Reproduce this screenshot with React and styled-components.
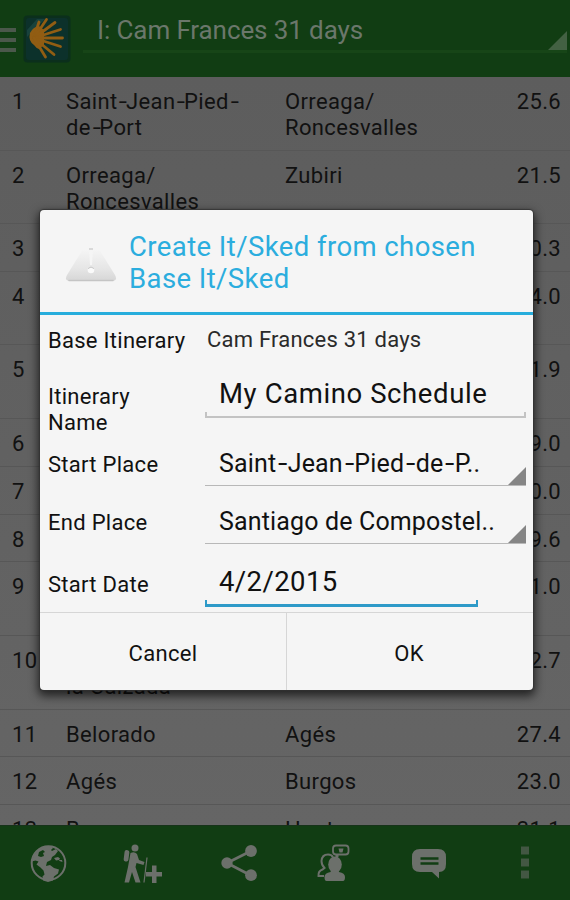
import React, { useState } from "react";
import styled, { createGlobalStyle } from "styled-components";

const GlobalStyle = createGlobalStyle`
  * {
    box-sizing: border-box;
  }

  body {
    margin: 0;
    background-color: #626262;
    font-family: Roboto, "Noto Sans", sans-serif;
  }
`;

const Screen = styled.div`
  position: relative;
  display: flex;
  flex-direction: column;
  width: 570px;
  height: 900px;
  overflow: hidden;
  background-color: #626262;
  color: #111;
`;

const TopBar = styled.header`
  display: flex;
  flex: 0 0 77px;
  align-items: flex-start;
  background-color: #113d13;
`;

const MenuLines = styled.div`
  display: flex;
  flex-direction: column;
  gap: 6px;
  width: 16px;
  margin-right: 7px;
  padding-top: 28px;
`;

const MenuLine = styled.span`
  height: 4px;
  background-color: #4b584b;
`;

const LogoIcon = styled.svg`
  display: block;
  width: 48px;
  height: 48px;
  margin-top: 15px;
`;

const TitleSpinner = styled.div`
  display: flex;
  align-items: flex-end;
  justify-content: space-between;
  flex: 1;
  height: 53px;
  margin: 0 3px 0 12px;
  padding-left: 14px;
  border-bottom: 3px solid #174517;
`;

const Title = styled.h1`
  margin: 0 0 4px;
  color: #6b776b;
  font-size: 26px;
  font-weight: 400;
  line-height: 32px;
  letter-spacing: -0.1px;
`;

const Corner = styled.span`
  flex: none;
  width: ${(props) => props.$size || 18}px;
  height: ${(props) => props.$size || 18}px;
  background-color: ${(props) => props.$color || "#858585"};
  clip-path: polygon(100% 0, 100% 100%, 0 100%);
`;

const StageList = styled.main`
  flex: 1;
  overflow: hidden;
  background: linear-gradient(#5d5d5d, #656565);
`;

const StageRow = styled.div`
  display: grid;
  grid-template-columns: 54px 219px 1fr auto;
  height: ${(props) => props.$height}px;
  padding: 12px 9px 0 12px;
  border-bottom: 1px solid #575757;
  font-size: 22px;
  line-height: 26px;
  letter-spacing: 0.35px;
  white-space: pre-line;
`;

const Dash = styled.span`
  display: inline-block;
  width: ${(props) => props.$width}em;
  text-indent: 0.06em;
  transform: scaleX(1.35);
  transform-origin: left;
`;

const BottomBar = styled.footer`
  display: flex;
  flex: 0 0 75px;
  align-items: center;
  justify-content: space-between;
  padding: 0 18px 0 21px;
  border-top: 1px solid #17331a;
  background-color: #113d13;
  color: #6c706b;
`;

const ActionIcon = styled.svg`
  display: block;
  width: 54px;
  height: 54px;
`;

const Overlay = styled.div`
  position: absolute;
  inset: 0;
  display: flex;
  align-items: center;
  padding-left: 40px;
`;

const Dialog = styled.section`
  width: 493px;
  height: 480px;
  border-radius: 4px;
  overflow: hidden;
  background-color: #f5f5f5;
  box-shadow: 0 0 1px 1px rgba(50, 50, 50, 0.8), 0 4px 10px 2px rgba(0, 0, 0, 0.65);
`;

const DialogHeader = styled.div`
  display: flex;
  align-items: center;
  height: 105px;
  padding-left: 24px;
  border-bottom: 3px solid #27addc;
`;

const WarningIcon = styled.svg`
  display: block;
  width: 54px;
  height: 48px;
  margin-right: 11px;
`;

const DialogTitle = styled.h2`
  margin: 4px 0 0;
  color: #2badde;
  font-size: 27.5px;
  font-weight: 400;
  line-height: 32.5px;
  letter-spacing: 0.42px;
  white-space: pre-line;
`;

const Form = styled.div`
  height: 298px;
  border-bottom: 1px solid #d6d6d6;
`;

const FormRow = styled.div`
  display: grid;
  grid-template-columns: 157px 321px;
  height: ${(props) => props.$height}px;
  padding-left: 8px;
`;

const Label = styled.label`
  padding-top: ${(props) => props.$top}px;
  font-size: 22px;
  line-height: 26px;
  letter-spacing: 0.28px;
  white-space: pre-line;
`;

const BaseValue = styled.span`
  padding: 12px 0 0 2px;
  color: #2a2a2a;
  font-size: 22px;
  line-height: 26px;
  letter-spacing: 0.22px;
`;

const InputFrame = styled.div`
  position: relative;
  width: ${(props) => props.$width}px;
  height: ${(props) => props.$height}px;
  border-bottom: ${(props) => (props.$focused ? 3 : 2)}px solid
    ${(props) => (props.$focused ? "#2e9ac8" : "#c3c3c3")};

  &::after {
    content: "";
    position: absolute;
    right: 0;
    bottom: 0;
    left: 0;
    height: 4px;
    border: solid ${(props) => (props.$focused ? "#2e9ac8" : "#c3c3c3")};
    border-width: 0 2px;
  }
`;

const Input = styled.input`
  width: 100%;
  height: 100%;
  padding: ${(props) => props.$top}px 0 0 14px;
  border: none;
  outline: none;
  background: transparent;
  color: #111;
  font-family: inherit;
  font-size: 27.5px;
  letter-spacing: ${(props) => props.$spacing}px;
`;

const Spinner = styled.div`
  display: flex;
  align-items: flex-end;
  justify-content: space-between;
  height: ${(props) => props.$height}px;
  padding-left: 14px;
  border-bottom: 1px solid #b8b8b8;
`;

const SpinnerText = styled.span`
  margin-bottom: 5px;
  font-size: 25px;
  line-height: 32px;
  letter-spacing: 0.15px;
  white-space: nowrap;
`;

const DialogActions = styled.div`
  display: grid;
  grid-template-columns: 247px 1fr;
  height: 77px;
`;

const DialogButton = styled.button`
  padding: 4px ${(props) => (props.$divided ? 0 : 2)}px 0 0;
  border: 0 solid #d6d6d6;
  border-right-width: ${(props) => (props.$divided ? 1 : 0)}px;
  background: transparent;
  color: #111;
  font-family: inherit;
  font-size: 22px;
  letter-spacing: 0.3px;
  cursor: pointer;
`;

const stages = [
  { id: 1, from: "Saint-Jean-Pied-\nde-Port", to: "Orreaga/\nRoncesvalles", km: "25.6", height: 74 },
  { id: 2, from: "Orreaga/\nRoncesvalles", to: "Zubiri", km: "21.5", height: 73 },
  { id: 3, from: "Zubiri", to: "Pamplona", km: "20.3", height: 48 },
  { id: 4, from: "Pamplona", to: "Puente la\nReina", km: "24.0", height: 73 },
  { id: 5, from: "Puente la\nReina", to: "Estella", km: "21.9", height: 74 },
  { id: 6, from: "Estella", to: "Torres del Río", km: "29.0", height: 48 },
  { id: 7, from: "Torres del Río", to: "Logroño", km: "20.0", height: 48 },
  { id: 8, from: "Logroño", to: "Nájera", km: "29.6", height: 47 },
  { id: 9, from: "Nájera", to: "Santo Domingo de\nla Calzada", km: "21.0", height: 74 },
  { id: 10, from: "Santo Domingo de\nla Calzada", to: "Belorado", km: "22.7", height: 74 },
  { id: 11, from: "Belorado", to: "Agés", km: "27.4", height: 47 },
  { id: 12, from: "Agés", to: "Burgos", km: "23.0", height: 48 },
  { id: 13, from: "Burgos", to: "Hontanas", km: "31.1", height: 48 },
];

// tip of each ray of the shell, clockwise from the top
const rays = [
  [16, 7],
  [23.5, 4.500],
  [32, 7.500],
  [37.500, 14.500],
  [39.500, 23],
  [37.500, 31.500],
  [31, 39.500],
  [22.500, 42],
];

// Hyphens are drawn wider than the font has them
const withDashes = (text, width) =>
  text.split(/(-)/).map((part, i) =>
    part === "-" ? (
      <Dash key={i} $width={width}>
        -
      </Dash>
    ) : (
      part
    )
  );

const ShellLogo = () => (
  <LogoIcon viewBox="0 0 48 48">
    <rect x="0.5" y="0.5" width="47" height="47" rx="4" fill="#0b2f1c" />
    <rect x="3" y="3" width="42" height="42" rx="3" fill="#0c312b" />
    <path d="M4 15 14 4h8L4 22z" fill="#23504b" opacity="0.55" />
    <path d="M7 18q3-6 9-7l5 4v15l-5 4q-3-1-5-4-6-4-4-12z" fill="#915d13" />
    <g stroke="#915d13" strokeWidth="2.800" strokeLinecap="round">
      {rays.map(([x, y]) => (
        <line key={`${x}-${y}`} x1="11" y1="23" x2={x} y2={y} />
      ))}
    </g>
  </LogoIcon>
);

const GlobeIcon = () => (
  <ActionIcon viewBox="0 0 54 54" fill="currentColor">
    <circle cx="27.5" cy="27" r="16.8" fill="none" stroke="currentColor" strokeWidth="2" />
    <path d="M13 19 18 13l6-2.500 6-.5 2 2-2 2 1 1 4-2 2 2-3 4-3 2-1 3-4 2-1 4 4-1 4 3 5 1.500-1 4-4 3-1 4-5 1.500-5-1.500-.5-4 2-2-1-4-3-3-4-3 2-3-3-1-4 1z" />
    <path d="M33 22l4-1 2 1.500-1 1.500-3 .5zm5 2 3 0 .5 2-3-1z" />
    <path d="M18 16l4-2 2 2-2 1 1 3-3 1-3-1z" fill="#113d13" />
  </ActionIcon>
);

const HikerIcon = () => (
  <ActionIcon viewBox="0 0 54 54" fill="currentColor">
    <circle cx="19" cy="12" r="3.5" />
    <rect x="8.2" y="14" width="4.8" height="11.5" rx="2" transform="rotate(7 10 19)" />
    <path d="M14.500 17q4-2 6.500 1l2 6 5.500 2-1 3-7-2-1 4 5 15.500h-5L16 36l-3 10.500H8.500L12 31z" />
    <path d="M31 21.500l-3 25" stroke="currentColor" strokeWidth="1.2" />
    <path d="M36 29.500h4.500V36H46v4.500h-5.500V47H36v-6.500h-6V36h6z" />
  </ActionIcon>
);

const ShareIcon = () => (
  <ActionIcon viewBox="0 0 54 54" fill="currentColor">
    <path d="M39 15 15 27l24 12.500" fill="none" stroke="currentColor" strokeWidth="2.800" />
    <circle cx="15" cy="27" r="5.700" />
    <circle cx="39" cy="15" r="5.900" />
    <circle cx="39" cy="39.200" r="5.900" />
  </ActionIcon>
);

const PeopleIcon = () => (
  <ActionIcon viewBox="0 0 54 54" fill="currentColor">
    <path
      d="M17 40h-5.500q-.5-5 4-6.500l2-1.500q-3-3-3-7 .5-6.500 6.500-6.500 4 0 5 3"
      fill="none"
      stroke="currentColor"
      strokeWidth="2"
    />
    <ellipse cx="28" cy="28.500" rx="6.800" ry="8" />
    <path d="M24.500 33h7l.5 3q6 1 6 5 0 4-2 4H19.500q-2 0-2-4 0-4 6-5z" />
    <rect x="26" y="9.500" width="15.500" height="9" rx="3" fill="none" stroke="currentColor" strokeWidth="1.800" />
    <path d="M28.500 18l3 0 0 3-3 3z" />
    <path d="M31.500 12.500h5l-1 4h-3z" />
  </ActionIcon>
);

const CommentIcon = () => (
  <ActionIcon viewBox="0 0 54 54" fill="currentColor">
    <path d="M17 13h18q8 0 8 8v7q0 8-7 8v6.500L29 36H17q-8 0-8-8v-7q0-8 8-8z" />
    <path d="M17.500 22.500h18M17.500 27.500h18" stroke="#113d13" strokeWidth="2.500" />
  </ActionIcon>
);

const MoreIcon = () => (
  <ActionIcon viewBox="0 0 54 54" fill="#435743">
    <rect x="23" y="10.500" width="8" height="8" />
    <rect x="23" y="22.500" width="8" height="8" />
    <rect x="23" y="34.500" width="8" height="8" />
  </ActionIcon>
);

const App = () => {
  const [name, setName] = useState("My Camino Schedule");
  const [date, setDate] = useState("4/2/2015");

  return (
    <Screen>
      <GlobalStyle />
      <TopBar>
        <MenuLines>
          <MenuLine />
          <MenuLine />
          <MenuLine />
        </MenuLines>
        <ShellLogo />
        <TitleSpinner>
          <Title>I: Cam Frances 31 days</Title>
          <Corner $size={19} $color="#436143" />
        </TitleSpinner>
      </TopBar>

      <StageList>
        {stages.map((stage) => (
          <StageRow key={stage.id} $height={stage.height}>
            <span>{stage.id}</span>
            <span>{withDashes(stage.from, 0.39)}</span>
            <span>{stage.to}</span>
            <span>{stage.km}</span>
          </StageRow>
        ))}
      </StageList>

      <BottomBar>
        <GlobeIcon />
        <HikerIcon />
        <ShareIcon />
        <PeopleIcon />
        <CommentIcon />
        <MoreIcon />
      </BottomBar>

      {/* Create schedule dialog */}
      <Overlay>
        <Dialog>
          <DialogHeader>
            <WarningIcon viewBox="0 0 54 48">
              <defs>
                <linearGradient id="warning" x1="0" y1="0" x2="0" y2="1">
                  <stop offset="0.25" stopColor="#f5f5f5" />
                  <stop offset="0.7" stopColor="#e6e6e6" />
                  <stop offset="1" stopColor="#d6d6d6" />
                </linearGradient>
              </defs>
              <path d="M24 4q3-4 6 0l21 34q3 6-3 6H6q-6 0-3-6z" fill="url(#warning)" />
              <path d="M5 43.500h44" stroke="#c5c5c5" strokeWidth="1.500" strokeLinecap="round" />
              <path d="M25 12h4l-1 16h-2z" fill="#f5f5f5" />
              <path d="M25 12h4" stroke="#cfcfcf" strokeWidth="1.500" />
              <circle cx="27" cy="33" r="3.300" fill="#fafafa" />
              <path d="M24 31.500q3-3 6 0" fill="none" stroke="#c2c2c2" />
            </WarningIcon>
            <DialogTitle>{"Create It/Sked from chosen\nBase It/Sked"}</DialogTitle>
          </DialogHeader>

          <Form>
            <FormRow $height={54}>
              <Label $top={13}>Base Itinerary</Label>
              <BaseValue>Cam Frances 31 days</BaseValue>
            </FormRow>
            <FormRow $height={66}>
              <Label $top={15}>{"Itinerary\nName"}</Label>
              <InputFrame $width={321} $height={49}>
                <Input
                  type="text"
                  $top={2}
                  $spacing={0.6}
                  value={name}
                  onChange={(e) => setName(e.target.value)}
                />
              </InputFrame>
            </FormRow>
            <FormRow $height={58}>
              <Label $top={17}>Start Place</Label>
              <Spinner $height={51}>
                <SpinnerText>{withDashes("Saint-Jean-Pied-de-P..", 0.46)}</SpinnerText>
                <Corner />
              </Spinner>
            </FormRow>
            <FormRow $height={58}>
              <Label $top={17}>End Place</Label>
              <Spinner $height={51}>
                <SpinnerText>Santiago de Compostel..</SpinnerText>
                <Corner />
              </Spinner>
            </FormRow>
            <FormRow $height={61}>
              <Label $top={21}>Start Date</Label>
              <InputFrame $width={273} $height={56} $focused>
                <Input
                  type="text"
                  $top={8}
                  $spacing={0.4}
                  value={date}
                  onChange={(e) => setDate(e.target.value)}
                />
              </InputFrame>
            </FormRow>
          </Form>

          <DialogActions>
            <DialogButton $divided>Cancel</DialogButton>
            <DialogButton>OK</DialogButton>
          </DialogActions>
        </Dialog>
      </Overlay>
    </Screen>
  );
};

export default App;
